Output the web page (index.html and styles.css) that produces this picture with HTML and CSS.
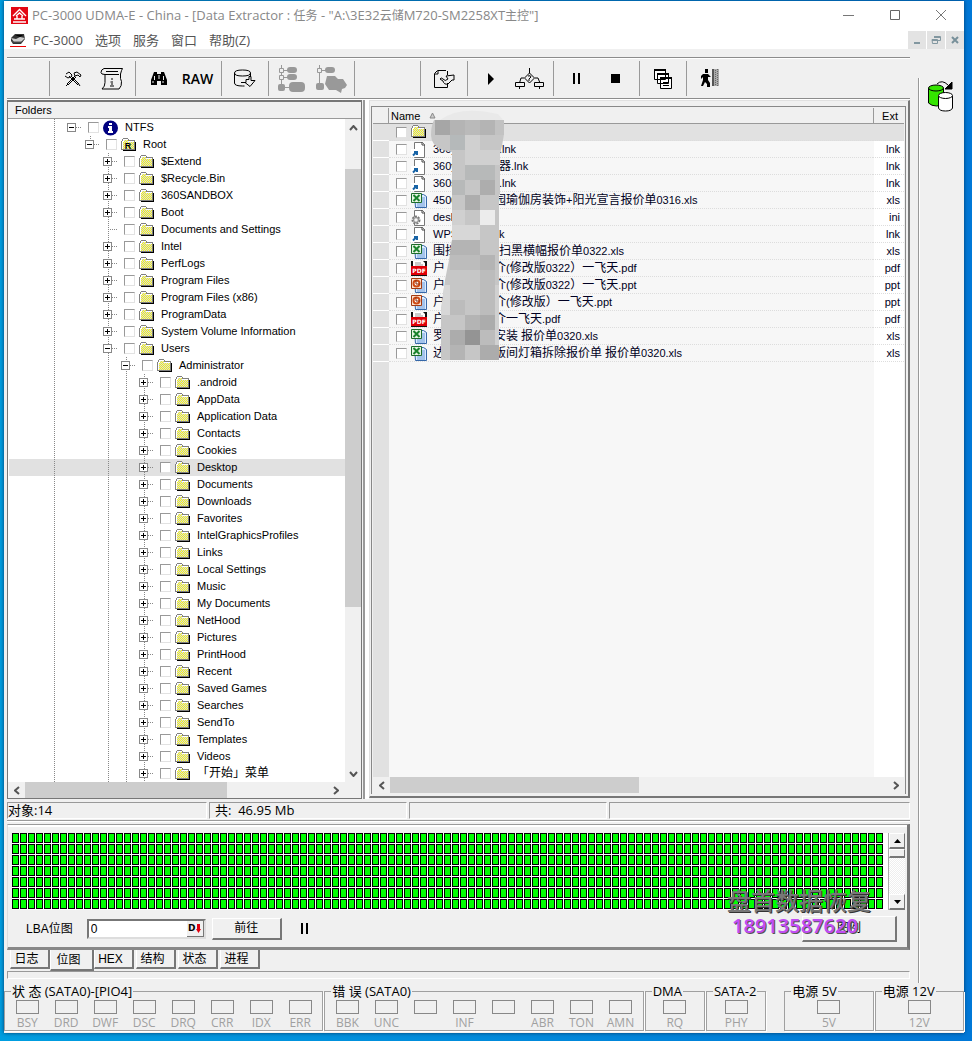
FILE: index.html
```html
<!DOCTYPE html>
<html lang="zh-CN">
<head>
<meta charset="utf-8">
<title>PC-3000 UDMA-E - Data Extractor</title>
<link rel="stylesheet" href="styles.css">
</head>
<body>
<svg class="defs" aria-hidden="true">
  <defs>
    <pattern id="dither" width="2" height="2" patternUnits="userSpaceOnUse"><rect width="2" height="2" fill="#ccccf8"/><rect width="1" height="1" fill="#ff0"/><rect x="1" y="1" width="1" height="1" fill="#ff0"/></pattern>
    <symbol id="folder" viewBox="0 0 16 14"><path d="M2 2h12v11H2z" fill="#000"/><path d="M14 4h1v9H3v-1h11z" fill="#000"/><path d="M0 3h1V1h1V0h5v1h1v1h6v10H0z" fill="#808080"/><path d="M1 3h1V1h5v2h6v8H1z" fill="#fff"/><path d="M2 4h11v7H2zM3 2h4v2H3z" fill="url(#dither)"/></symbol>
    <symbol id="root" viewBox="0 0 16 14"><use href="#folder"/><text x="7" y="11" text-anchor="middle" font-family="Liberation Sans" font-weight="bold" font-size="9" fill="#000">R</text></symbol>
    <symbol id="info" viewBox="0 0 16 16"><circle cx="7.500" cy="8" r="7.500" fill="#000080"/><path d="M6 3h3v2H6zM5 6h4v5h1v2H5v-2h1V8H5z" fill="#fff"/></symbol>
    <symbol id="lnk" viewBox="0 0 16 17"><path d="M3.500 1.500h8l2 2v13h-10z" fill="#fff" stroke="#777"/><path d="M11 1v3h3" fill="none" stroke="#444"/><path d="M0 8h8v8H0z" fill="#fff"/><path d="M2 14.500l3-3M3 11h3v3" fill="none" stroke="#1763a6" stroke-width="2"/></symbol>
    <symbol id="ini" viewBox="0 0 16 17"><path d="M3.500 1.500h8l2 2v13h-10z" fill="#fff" stroke="#777"/><path d="M11 1v3h3" fill="none" stroke="#444"/><circle cx="5" cy="11" r="3.500" fill="#eee" stroke="#777" stroke-width="2" stroke-dasharray="2 1"/><circle cx="5" cy="11" r="2.500" fill="#ddd" stroke="#888"/><circle cx="5" cy="11" r="1" fill="#fff"/></symbol>
    <symbol id="doc" viewBox="0 0 16 17"><path d="M3.500 2.500h9l3 2v11h-11z" fill="#dcebff" stroke="#3567a8"/><path d="M9 6h5M9 8h5M9 10h5M6 12h8M6 14h8" stroke="#6b9bd8"/></symbol>
    <symbol id="xls" viewBox="0 0 16 17"><use href="#doc"/><path d="M.5 1.500h10v9H.5z" fill="#e7f5e4" stroke="#1d6b2a"/><path d="M2.500 3l6 6M8.500 3l-6 6" stroke="#19832c" stroke-width="2"/></symbol>
    <symbol id="ppt" viewBox="0 0 16 17"><use href="#doc"/><path d="M.5 1.500h10v10H.5z" fill="#fbe3d0" stroke="#a33a12"/><circle cx="5.500" cy="6.500" r="3" fill="#fff" stroke="#cf4a14" stroke-width="2"/><path d="M5 3v4h4" fill="none" stroke="#8c2a08"/></symbol>
    <symbol id="pdf" viewBox="0 0 16 17"><path d="M0 1h16v15H0z" fill="#111"/><path d="M2 1h10l2 2v3H2z" fill="#fff"/><path d="M4 3h6M4 5h8" stroke="#999"/><path d="M0 6h16v9H0z" fill="#e00008"/><text x="8" y="13" text-anchor="middle" font-family="DejaVu Sans" font-weight="bold" font-size="6" fill="#fff">PDF</text></symbol>
  </defs>
</svg>
<div class="window">
  <header class="titlebar">
    <svg width="17" height="17" viewBox="0 0 17 17"><path d="M0 0h17v17H0z" fill="#e30613"/><path d="M2 9l6.500-6.500L15 9M5 9l3.500-3L12 9M3 12h11M2 15h13M6 9v3M11 9v3" fill="none" stroke="#fff" stroke-width="1.400"/></svg>
    <h1>PC-3000 UDMA-E - China - [Data Extractor : <span>任务</span> - "A:\3E32<span>云储</span>M720-SM2258XT<span>主控</span>"]</h1>
    <div class="caption">
      <button aria-label="Minimize"><svg width="12" height="12"><path d="M0 6.500h11" stroke="#777"/></svg></button>
      <button aria-label="Maximize"><svg width="12" height="12"><path d="M1.500 1.500h9v9h-9z" fill="none" stroke="#666"/></svg></button>
      <button aria-label="Close"><svg width="12" height="12"><path d="M1 1l10 10M11 1L1 11" stroke="#777"/></svg></button>
    </div>
  </header>
  <nav class="menubar">
    <svg width="16" height="14" viewBox="0 0 16 14"><path d="M1 5l4-4h9l1 5-4 5H3L1 8z" fill="#333"/><path d="M1 5l5 1 4-2 5 1-4 4H4z" fill="#ccc"/><path d="M5 2h8l-3 2z" fill="#000"/><path d="M2 9h10" stroke="#555"/><path d="M0 13.500h16" stroke="#e00"/></svg>
    <button>PC-3000</button><button>选项</button><button>服务</button><button>窗口</button><button>帮助(Z)</button>
    <div class="mdi">
      <button aria-label="Minimize child"><svg width="10" height="10"><path d="M2 8h6" stroke="#8297a0" stroke-width="2"/></svg></button>
      <button aria-label="Restore child"><svg width="10" height="10" fill="none" stroke="#8297a0"><path d="M3 1.500h6.500v4H7M1 4.500h5.500v4h-5zM3 2.500h6M1 5.500h5"/></svg></button>
      <button aria-label="Close child"><svg width="10" height="10"><path d="M2 2l6 6M8 2L2 8" stroke="#78909a" stroke-width="2"/></svg></button>
    </div>
  </nav>
  <div class="body">
    <main class="main">
      <div class="toolbar">
        <div class="group spacer"></div>
        <div class="group">
          <button aria-label="Tools"><svg width="18" height="18" fill="none" stroke="#000"><path d="M2 4l3-2 3 3-1 2M1 6l3 2 2-1M5 6l9 9M15 14l-8-8M4 15l8-8M3 14l8-8M10 3l3-1 4 3-1 2-2-2-3 1zM2 16l2-2M14 13l2 3"/></svg></button>
          <button aria-label="Report"><svg width="24" height="24" viewBox="0 0 24 24" fill="none" stroke="#000"><path d="M4 1.500h18.500M4 1.500q-3 1-3 4 0 2 4 2v8q0 4-3 6.500h17q3-3 2.500-7.500l-1-3V7q1-4 2-5.500M5 7.500h14M6 4.500h12"/><path d="M12 11v2M10.500 15H12v4M10 19h4" stroke="#777" stroke-width="2"/></svg></button>
        </div>
        <div class="group">
          <button aria-label="Find"><svg width="18" height="16"><path d="M4 1h3v2h4V1h3l3 8v5h-6v-4H7v4H1V9z"/><path d="M4.500 5v4M9 4v4M13.500 5v4M3 10v2M13 10v2" stroke="#efefef"/></svg></button>
          <button class="raw">RAW</button>
        </div>
        <div class="group one">
          <button aria-label="Save disk"><svg width="24" height="20" fill="none" stroke="#000"><path d="M1.500 4q0-3 8-3t8 3-8 3-8-3v10q0 3 8 3h2M17.500 4v3M8 13.500h5v-3h3v-3h2v4h4l-5 6-5-4"/></svg></button>
        </div>
        <div class="group">
          <button aria-label="Expand tree" disabled><svg width="28" height="27" viewBox="0 0 28 27"><path d="M3.500 0v20M4 5.500h8M4 12.500h8M4 22.500h8" stroke="#999"/><path d="M1.500 3.500h4v4h-4zM1.500 10.500h4v4h-4z" fill="#efefef" stroke="#999"/><g fill="#999"><rect x="9" y="2" width="10" height="6" rx="3"/><rect x="9" y="9" width="10" height="6" rx="3"/><rect x="0" y="19" width="7" height="7" rx="2"/><rect x="11" y="17" width="16" height="10" rx="4"/></g></svg></button>
          <button aria-label="Tree map" disabled><svg width="32" height="28" viewBox="0 0 32 28"><path d="M4.500 0v20M5 5.500h8" stroke="#999"/><path d="M2.500 3.500h4v4h-4z" fill="#efefef" stroke="#999"/><g fill="#999"><rect x="10" y="2" width="10" height="6" rx="3"/><rect x="1" y="18" width="8" height="7" rx="2"/><path d="M12 11h8l3 3h5l4 6-2 3-3 1-1 4-5-3h-7l-4-6z"/></g></svg></button>
        </div>
        <div class="group blank"></div>
        <div class="group one">
          <button aria-label="Import"><svg width="22" height="20" fill="none" stroke="#000"><path d="M13 1.500H4.500l-3 3v14h13V14M14.500 2v4M5 2v3H2M7 10q1-2 3 0 2 3 5 0l-2-3 8-1v5h-2l-4 4q-4 1-5-3z"/></svg></button>
        </div>
        <div class="group">
          <button aria-label="Start"><svg width="8" height="12"><path d="M1 0l6 6-6 6z"/></svg></button>
          <button aria-label="Flow"><svg width="32" height="22" fill="none" stroke="#000"><path d="M15.500 0v5l-5 5 5 5 5-5-5-5M10 10H7L5.500 15M21 10h3l2 5M1.500 14.500h9v4h-9zM20.500 14.500h9v4h-9zM5.500 19v2M25.500 19v2M14 8q3-1 3 1l-2 2v2"/></svg></button>
        </div>
        <div class="group">
          <button aria-label="Pause"><svg width="8" height="11"><path d="M0 0h2v11H0zM5 0h2v11H5z"/></svg></button>
          <button aria-label="Stop"><svg width="9" height="9"><path d="M0 0h9v9H0z"/></svg></button>
        </div>
        <div class="group one">
          <button aria-label="Windows"><svg width="20" height="20" fill="#fff" stroke="#000"><path d="M1.500 .5h11v10h-11zM4.500 4.500h11v10h-11zM7.500 8.500h11v11h-11z"/><path d="M1 1h12M4 5h12M7 9h12" stroke-width="2"/><path d="M10 13.500h6M10 16.500h6"/></svg></button>
        </div>
        <div class="group">
          <button aria-label="Exit"><svg width="20" height="19"><path d="M5 0h3v4H5zM3 5h5l3 3H8v3l2 3v4H7v-3l-2-2-2 4H1l2-6V8L1 10V7z"/><path d="M12 0h2v17h-2z" fill="#555"/><path d="M14 0h5v17h-5z" fill="#aaa"/><path d="M15.500 1v16M17.500 0v17" stroke="#666" stroke-dasharray="1 1"/></svg></button>
        </div>
      </div>

      <div class="panels">
        <section class="folders">
          <h2>Folders</h2>
          <div class="tree-area">
            <ul class="tree" id="tree"></ul>
            <div class="vscroll">
              <button aria-label="Scroll up"><svg width="9" height="6"><path d="M1 5l3.500-4L8 5" fill="none" stroke="#555" stroke-width="2"/></svg></button>
              <div class="track"><div class="thumb"></div></div>
              <button aria-label="Scroll down"><svg width="9" height="6"><path d="M1 1l3.500 4L8 1" fill="none" stroke="#555" stroke-width="2"/></svg></button>
            </div>
          </div>
          <div class="hscroll tree-h">
            <button aria-label="Scroll left"><svg width="6" height="9"><path d="M5 1L1 4.500 5 8" fill="none" stroke="#555" stroke-width="2"/></svg></button>
            <div class="track"><div class="thumb"></div></div>
            <button aria-label="Scroll right"><svg width="6" height="9"><path d="M1 1l4 3.500L1 8" fill="none" stroke="#555" stroke-width="2"/></svg></button>
          </div>
        </section>
        <div class="splitter"></div>
        <section class="files">
          <div class="files-inner">
            <div class="list">
              <table>
                <thead><tr><th class="gut"></th><th class="name">Name <svg width="7" height="7"><path d="M3.500 1L6 6H1z" fill="#ccc" stroke="#888"/></svg></th><th class="ext">Ext</th></tr></thead>
                <tbody id="files"></tbody>
              </table>
              <svg class="mosaic" width="74" height="252" viewBox="431 109 74 252" aria-hidden="true">
                <clipPath id="blob"><path d="M436 120h68v14l-2 12-2 8v41h-1v165h-58v-50l4-30 4-20 3-20v-88l-9-2q-12-4-12-15 0-9 3-15z"/></clipPath>
                <path d="M440 120q20-15 58-6l5 6z" fill="#e9e9e9"/>
                <g clip-path="url(#blob)">
                  <path fill="#c6c6c6" d="M431 109h74v252h-74z"/>
                  <path fill="#a6a6a6" d="M435 120h15v15h-15z"/><path fill="#b4b4b4" d="M450 120h15v15h-15zM480 120h15v15h-15z"/><path fill="#bababa" d="M465 120h15v15h-15z"/><path fill="#c2c2c2" d="M495 120h10v15h-10z"/>
                  <path fill="#b5b9ba" d="M450 135h15v15h-15z"/><path fill="#d0d0d0" d="M465 135h15v30h-15zM480 150h20v15h-20zM450 210h15v15h-15z"/>
                  <path fill="#b7b9b9" d="M465 165h15v15h-15zM480 165h15v15h-15zM450 180h15v15h-15z"/><path fill="#adadad" d="M480 180h15v15h-15zM465 195h15v15h-15z"/>
                  <path fill="#ececec" d="M480 210h15v15h-15z"/><path fill="#d7d7d7" d="M450 225h30v15h-30zM431 285h19v15h-19zM441 300h9v15h-9z"/>
                  <path fill="#b4b4b4" d="M445 240h35v15h-35zM480 255h15v15h-15zM465 315h15v15h-15zM450 345h15v15h-15z"/>
                  <path fill="#bcbcbc" d="M450 255h30v15h-30zM480 270h15v15h-15zM450 300h15v15h-15zM480 285h15v30h-15zM480 330h15v15h-15z"/>
                  <path fill="#acacac" d="M480 315h15v15h-15zM480 345h19v15h-19zM450 330h15v15h-15z"/><path fill="#949494" d="M465 330h15v15h-15z"/>
                  <path fill="#d0d0d0" d="M495 285h4v60h-4z"/>
                </g>
              </svg>
            </div>
            <div class="hscroll">
              <button aria-label="Scroll left"><svg width="6" height="9"><path d="M5 1L1 4.500 5 8" fill="none" stroke="#555" stroke-width="2"/></svg></button>
              <div class="track"><div class="thumb"></div></div>
              <button aria-label="Scroll right"><svg width="6" height="9"><path d="M1 1l4 3.500L1 8" fill="none" stroke="#555" stroke-width="2"/></svg></button>
            </div>
          </div>
        </section>
      </div>

      <div class="status"><span>对象:14</span><span class="total">共:&nbsp; 46.95 Mb</span><span></span><span></span></div>

      <section class="bitmap">
        <div class="map-row">
          <div class="map"></div>
          <div class="classic-scroll">
            <button aria-label="Up"><svg width="7" height="4"><path d="M0 4l3.500-4L7 4z"/></svg></button>
            <div class="grip"></div>
            <div class="fill"></div>
            <button aria-label="Down"><svg width="7" height="4"><path d="M0 0h7L3.500 4z"/></svg></button>
          </div>
        </div>
        <div class="controls">
          <label for="lba">LBA位图</label>
          <div class="lba"><input id="lba" type="text" value="0"><button>D<svg width="5" height="9"><path d="M1 0h3v5h1L2.500 9 0 5h1z" fill="#e00010"/></svg></button></div>
          <button class="btn go">前往</button>
          <button class="pause" aria-label="Pause"><svg width="8" height="11"><path d="M0 0h2v11H0zM5 0h2v11H5z"/></svg></button>
          <button class="btn legend-btn">图例</button>
        </div>
        <div class="watermark"><b>盘首数据恢复</b><span>18913587620</span></div>
      </section>
      <div class="tabs"><button>日志</button><button class="active">位图</button><button>HEX</button><button>结构</button><button>状态</button><button>进程</button></div>
      <div class="well"></div>
    </main>
    <aside class="side">
      <button aria-label="Copy disk"><svg width="28" height="33" viewBox="0 0 28 33" stroke="#000"><path d="M1.500 8v15q3 3 8 3t7-2V8" fill="#34e400"/><ellipse cx="9" cy="8" rx="7.500" ry="3" fill="#34e400"/><path d="M11.500 16v12q1 3 7 3t7-3V16" fill="#fff"/><ellipse cx="18.500" cy="15.500" rx="7" ry="3" fill="#fff"/><path d="M10 4q5-5 11 1" fill="none"/><path d="M25 2v7h-7z"/></svg></button>
    </aside>
  </div>
  <footer class="leds">
    <fieldset class="eight"><legend>状 态 (SATA0)-[PIO4]</legend><div><span>BSY</span><span>DRD</span><span>DWF</span><span>DSC</span><span>DRQ</span><span>CRR</span><span>IDX</span><span>ERR</span></div></fieldset>
    <fieldset class="eight"><legend>错 误 (SATA0)</legend><div><span>BBK</span><span>UNC</span><span></span><span>INF</span><span></span><span>ABR</span><span>TON</span><span>AMN</span></div></fieldset>
    <fieldset class="small"><legend>DMA</legend><div><span>RQ</span></div></fieldset>
    <fieldset class="small"><legend>SATA-2</legend><div><span>PHY</span></div></fieldset>
    <fieldset class="power first"><legend>电源 5V</legend><div><span>5V</span></div></fieldset>
    <fieldset class="power"><legend>电源 12V</legend><div><span>12V</span></div></fieldset>
  </footer>
</div>
<script src="lists.js"></script>
</body>
</html>
```
FILE: lists.js
```js
const icon = (id) => `<svg class="ic ic-${id}"><use href="#${id}"/></svg>`;
const zh = (text) => text.replace(/[^\x00-\x7f]+/g, '<span class="zh">$&</span>');

// A node is a name, or [name, children, icon]; children are listed for open folders.
const tree = [["NTFS", [["Root", [
  "$Extend", "$Recycle.Bin", "360SANDBOX", "Boot", "Documents and Settings", "Intel",
  "PerfLogs", "Program Files", "Program Files (x86)", "ProgramData",
  "System Volume Information",
  ["Users", [["Administrator", [
    ".android", "AppData", "Application Data", "Contacts", "Cookies", "Desktop",
    "Documents", "Downloads", "Favorites", "IntelGraphicsProfiles", "Links",
    "Local Settings", "Music", "My Documents", "NetHood", "Pictures", "PrintHood",
    "Recent", "Saved Games", "Searches", "SendTo", "Templates", "Videos", "「开始」菜单"
  ]]]]
], "root"]], "info"]];
const leaves = ["Documents and Settings"];
const selected = "Desktop";

function renderNode(node) {
  const [name, children, id = "folder"] = Array.isArray(node) ? node : [node];
  const leaf = leaves.includes(name);
  const cls = "row" + (leaf ? " leaf" : "") + (name === selected ? " selected" : "");
  const box = leaf ? "" : `<button class="${children ? "minus" : "plus"}" aria-label="${name}"></button>`;
  const sub = children ? `<ul${name === "NTFS" ? ' class="stub"' : ""}>${children.map(renderNode).join("")}</ul>` : "";
  return `<li><div class="${cls}">${box}<label><input type="checkbox">${icon(id)}<span>${zh(name)}</span></label></div>${sub}</li>`;
}
document.getElementById("tree").innerHTML = tree.map(renderNode).join("");

// Icon, start of the name, end of the name, extension, wide gap between the two parts.
const files = [
  ["lnk", "360y", ".lnk", "lnk", true],
  ["lnk", "360y", "器.lnk", "lnk", true],
  ["lnk", "360s", ".lnk", "lnk", true],
  ["xls", "4500", "园瑜伽房装饰+阳光宣言报价单0316.xls", "xls"],
  ["ini", "desk", "", "ini"],
  ["lnk", "WPS", "k", "lnk", true],
  ["xls", "围挡", "扫黑横幅报价单0322.xls", "xls", true],
  ["pdf", "户", "介(修改版0322）一飞天.pdf", "pdf"],
  ["ppt", "户", "介(修改版0322）一飞天.ppt", "ppt"],
  ["ppt", "户", "介(修改版）一飞天.ppt", "ppt"],
  ["pdf", "户", "介一飞天.pdf", "pdf"],
  ["xls", "罗", "安装 报价单0320.xls", "xls"],
  ["xls", "达", "版间灯箱拆除报价单 报价单0320.xls", "xls"]
];
document.getElementById("files").innerHTML =
  `<tr class="current"><td class="gut"></td><td><label><input type="checkbox" aria-label="Folder">${icon("folder")}</label></td><td class="ext"></td></tr>` +
  files.map(([id, head, tail, ext, wide]) =>
    `<tr><td class="gut"></td><td><label><input type="checkbox">${icon(id)}<span class="head${wide ? " wide" : ""}">${zh(head)}</span><span>${zh(tail)}</span></label></td><td class="ext">${ext}</td></tr>`
  ).join("");
```
FILE: styles.css
```css
* { box-sizing: border-box; }
body {
  margin: 0;
  padding: 1px 8px 8px 4px;
  min-height: 100vh;
  display: flex;
  background: linear-gradient(90deg, #009ee0, #0078d7);
  border-bottom: 1px solid #10283c;
  font: 12px/16px "Open Sans", "Noto Sans CJK SC", sans-serif;
  color: #000;
}
h1, h2, ul { margin: 0; padding: 0; font-weight: normal; list-style: none; }
button { margin: 0; padding: 0; border: 0; background: none; font: inherit; color: inherit; display: flex; align-items: center; justify-content: center; }
svg { flex: none; display: block; }
.defs { position: absolute; width: 0; height: 0; }
.window { flex: 1; min-width: 0; background: #f0f0f0; display: flex; flex-direction: column; box-shadow: 0 0 4px #003c6c; }

.titlebar { height: 28px; background: #fff; display: flex; align-items: center; padding-left: 7px; gap: 4px; }
.titlebar h1 { flex: 1; font-size: 13px; color: #888; white-space: nowrap; }
.titlebar h1 span { font-size: 12px; }
.caption { display: flex; }
.caption button { width: 46px; height: 28px; }
.menubar { height: 20px; background: #fff; display: flex; align-items: center; padding: 2px 0 0 6px; color: #555; font-size: 13px; }
.menubar > button { margin-left: 12px; }
.menubar > svg + button { margin-left: 7px; }
.mdi { margin-left: auto; display: flex; gap: 1px; align-self: flex-end; }
.mdi button { width: 18px; height: 18px; background: #e3e3e3; }

.body { display: flex; flex: 1; }
.main { flex: 1; min-width: 0; padding: 8px 8px 4px 3px; display: flex; flex-direction: column; }
.side { width: 46px; margin-top: 29px; border-left: 1px solid #999; box-shadow: inset 1px 0 #fff; padding: 2px 8px; }

.toolbar { height: 42px; margin-bottom: 1px; border-top: 1px solid #8c8c8c; border-bottom: 1px solid #8c8c8c; box-shadow: inset 0 1px #fff, 0 1px #fff; display: flex; padding: 3px 0 2px; }
.group { width: 86px; padding-left: 3px; border-left: 1px solid #999; display: flex; }
.group button { width: 39px; }
.group.spacer { width: 42px; border: 0; }
.group.one { width: 47px; }
.group.blank { width: 66px; }
.group .raw { font: 600 14px/20px "Open Sans", sans-serif; }

.panels { display: flex; flex: 1; font: 11px/17px "Liberation Sans", "Noto Sans CJK SC", sans-serif; }
.zh { font-size: 12px; }
.folders { width: 355px; background: #fff; border: 1px solid #777; border-top-width: 2px; display: flex; flex-direction: column; }
.folders h2 { height: 17px; font-size: 11px; line-height: 17px; padding-left: 7px; background: #f0f0f0; border-bottom: 1px solid #999; }
.tree-area { flex: 1; display: flex; }
.tree { flex: 1; isolation: isolate; padding-left: 59px; position: relative; }
.tree::before { content: ""; position: absolute; left: 46px; top: 0; bottom: 0; width: 1px; background: repeating-linear-gradient(#888 0 1px, transparent 1px 2px); }
ul ul { margin-left: 18px; background: repeating-linear-gradient(#888 0 1px, transparent 1px 2px) 5px 0 / 1px 100% no-repeat; }
ul ul.stub { background-size: 1px 6px; }
.row { height: 17px; display: flex; align-items: center; position: relative; }
.row.leaf { padding-left: 5px; }
.row > button { width: 9px; height: 9px; border: 1px solid #888; background: linear-gradient(#000, #000) center / 5px 1px no-repeat, linear-gradient(#000, #000) center / 1px 5px no-repeat, #fff; }
.row > button.minus { background: linear-gradient(#000, #000) center / 5px 1px no-repeat, #fff; }
.row::before { content: ""; order: 1; width: 6px; height: 1px; background: repeating-linear-gradient(90deg, #888 0 1px, transparent 1px 2px); }
.row.leaf::before { width: 10px; }
.row label { order: 2; margin-left: 6px; }
.row.selected::after { content: ""; position: absolute; z-index: -1; top: 0; bottom: 0; right: 0; width: 336px; background: #e1e1e1; }
label { display: flex; align-items: center; white-space: nowrap; }
input[type="checkbox"] { appearance: none; width: 11px; height: 11px; margin: 0; background: #fff; border: 1px solid #e2e2e2; border-top-color: #999; border-left-color: #999; }
.ic { width: 16px; height: 17px; margin: 0 6px 0 4px; }
.ic-folder, .ic-root { height: 14px; }
.ic-info { height: 16px; }

.hscroll { height: 16px; display: flex; background: #f0f0f0; }
.hscroll button { width: 17px; }
.vscroll { width: 16px; display: flex; flex-direction: column; background: #f0f0f0; }
.vscroll button { height: 17px; }
.track { flex: 1; }
.thumb { background: #cdcdcd; width: 50%; height: 100%; }
.vscroll .track { padding-top: 33px; }
.vscroll .thumb { width: 100%; height: 438px; }
.tree-h { padding-right: 17px; }
.tree-h .thumb { width: 67%; }
.splitter { width: 7px; background: linear-gradient(90deg, #f0f0f0 1px, #999 1px 3px, #fff 3px); }

.files { flex: 1; min-width: 0; margin-bottom: 1px; border: 1px solid #e0e0e0; border-right: 2px solid #777; border-bottom: 2px solid #777; padding: 5px 2px 2px 1px; }
.files-inner { height: 100%; border: 1px solid #888; border-bottom: 0; display: flex; flex-direction: column; padding: 1px; }
.list { flex: 1; position: relative; background: linear-gradient(90deg, #e1e1e1 16px, transparent 16px), linear-gradient(270deg, #fff 30px, #f7f7f7 30px); }
table { width: 100%; border-collapse: separate; border-spacing: 0; table-layout: fixed; }
th { height: 16px; padding: 2px 0 0 2px; font-weight: normal; text-align: left; line-height: 13px; background: #f0f0f0; border-bottom: 1px solid #999; }
th.gut { width: 16px; border-right: 1px solid #999; }
th svg { display: inline-block; margin-left: 6px; vertical-align: 1px; }
th.ext, td.ext { width: 31px; border-left: 1px solid #999; text-align: center; }
td { padding: 0 0 0 7px; height: 17px; line-height: 16px; border-bottom: 1px dotted #ddd; color: #002; }
td.gut { padding: 0; border-color: #fff; border-bottom-style: solid; background: #e1e1e1; }
td.ext { border-left: 0; padding: 0 4px 0 0; text-align: right; }
tr.current td { background: #e1e1e1; }
td label { height: 16px; }
.head { width: 61px; }
.head.wide { width: 66px; }
.mosaic { position: absolute; left: 58px; top: 1px; }

.status { display: flex; gap: 2px; margin-top: 3px; padding-bottom: 1px; border-bottom: 1px solid #999; box-shadow: 0 1px #fff; }
.status span { width: 200px; height: 17px; border: 1px solid #999; border-right-color: #fff; border-bottom-color: #fff; line-height: 15px; font-size: 13px; }
.status span:nth-child(n+2) { width: 198px; }
.status .total { padding-left: 5px; }
.status span:last-child { flex: 1; }

.bitmap { position: relative; margin-top: 3px; border: 1px solid #999; border-left-color: #ddd; border-right: 3px solid #777; border-bottom: 3px solid #888; box-shadow: inset 0 2px #fff; padding: 8px 2px 0 4px; }
.map-row { display: flex; gap: 5px; height: 77px; background: #fff; }
.map { flex: 1; background:
  repeating-linear-gradient(90deg, transparent 0 7px, #fff 7px 8px),
  repeating-linear-gradient(transparent 0 10px, #fff 10px 11px),
  repeating-linear-gradient(90deg, #000 0 1px, transparent 1px 6px, #000 6px 8px),
  repeating-linear-gradient(#000 0 1px, #0f0 1px 9px, #000 9px 11px); }
.classic-scroll { width: 17px; border-left: 1px solid #aaa; display: flex; flex-direction: column; }
.classic-scroll button, .grip { height: 16px; background: #f0f0f0; border: 1px solid #fff; border-right-color: #777; border-bottom: 2px solid #777; }
.grip { height: 9px; }
.fill { flex: 1; background: repeating-conic-gradient(#fff 0 25%, #eee 0 50%) 0 0 / 2px 2px; }
.controls { height: 37px; display: flex; align-items: center; padding: 0 8px 0 14px; font: 12px/16px "Liberation Sans", "Noto Sans CJK SC", sans-serif; }
.lba { width: 119px; height: 20px; margin: 0 6px 0 14px; display: flex; background: #fff; border: 2px solid #777; border-right-color: #ddd; border-bottom-color: #ddd; }
.lba input { flex: 1; min-width: 0; border: 0; padding: 0 2px; font: inherit; }
.lba button { width: 17px; background: #f0f0f0; border-right: 1px solid #777; border-bottom: 1px solid #777; font: bold 9px/12px "DejaVu Sans", sans-serif; gap: 1px; }
.btn { height: 22px; border: 1px solid #fff; border-right: 2px solid #777; border-bottom: 2px solid #777; }
.go { width: 70px; }
.pause { margin-left: 19px; }
.legend-btn { width: 95px; height: 26px; margin-left: auto; }
.watermark { position: absolute; right: 36px; top: 61px; display: flex; flex-direction: column; align-items: flex-start; pointer-events: none; }
.watermark b { font: 500 24px/28px "Noto Sans CJK SC", sans-serif; color: #777; text-shadow: 1px 1px #333; }
.watermark span { margin-left: 5px; font: 600 20px/24px "Noto Sans", sans-serif; color: #c04df4; text-shadow: 1px 1px #555; }

.tabs { display: flex; gap: 2px; padding-left: 3px; height: 21px; align-items: flex-start; font: 12px/16px "Liberation Sans", "Noto Sans CJK SC", sans-serif; }
.tabs button { width: 40px; height: 19px; padding-right: 6px; border-left: 1px solid #fff; border-right: 2px solid #777; border-bottom: 2px solid #777; }
.tabs .active { width: 44px; height: 21px; margin: 0 -2px; }
.well { height: 8px; border: 1px solid #999; border-right-color: #fff; border-bottom-color: #fff; }

.leds { height: 50px; display: flex; gap: 1px; padding-bottom: 2px; }
fieldset { min-width: 0; margin: 0; padding: 0; border: 1px solid #a0a0a0; box-shadow: 1px 1px #fff; }
legend { margin-left: 6px; padding: 0 1px; font-size: 13px; line-height: 16px; }
fieldset div { display: flex; justify-content: center; margin-top: 1px; }
fieldset span { flex: 0 0 39px; text-align: center; color: #a0a0a0; line-height: 16px; }
fieldset span::before { content: ""; display: block; width: 21px; height: 12px; margin: 0 auto 1px; border: 1px solid #888; }
.eight { flex: 1 1 319px; }
.small { flex: 1 1 60px; }
.power { flex: 1 1 89px; }
.power.first { margin-left: 17px; }
```
